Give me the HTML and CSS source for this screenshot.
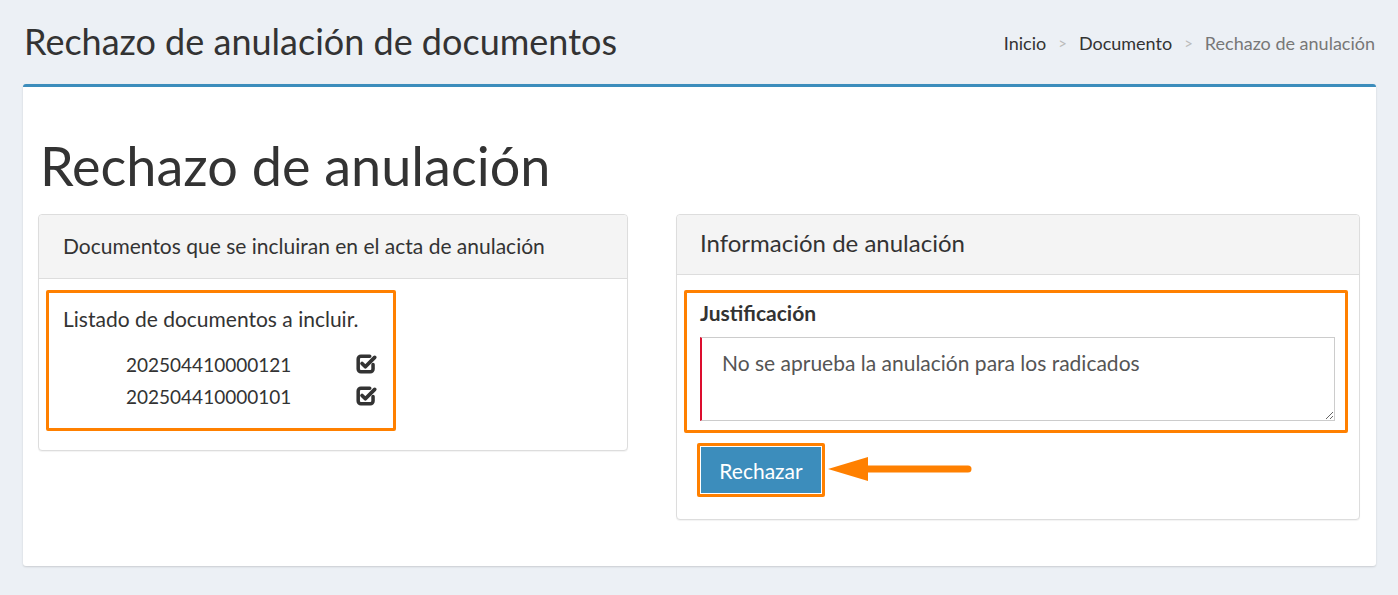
FILE: index.html
```html
<!DOCTYPE html>
<html lang="es">
<head>
<meta charset="utf-8">
<title>Rechazo de anulación de documentos</title>
<link rel="stylesheet" href="styles.css">
</head>
<body>
<header class="content-header">
  <h1 class="page-title">Rechazo de anulación de documentos</h1>
  <ol class="breadcrumb">
    <li class="crumb">Inicio</li>
    <li class="sep">&gt;</li>
    <li class="crumb">Documento</li>
    <li class="sep">&gt;</li>
    <li class="crumb active">Rechazo de anulación</li>
  </ol>
</header>
<main class="box">
  <h2 class="box-title">Rechazo de anulación</h2>
  <div class="row">
    <section class="panel panel-left">
      <div class="panel-heading">Documentos que se incluiran en el acta de anulación</div>
      <div class="panel-body">
        <div class="highlight list-box">
          <p class="list-intro">Listado de documentos a incluir.</p>
          <ul class="doc-list">
            <li class="doc-item"><span class="doc-num">202504410000121</span>
              <svg class="check" viewBox="0 0 20 18" width="22" height="20"><path d="M15.5 9.5 V13.5 A2.5 2.5 0 0 1 13 16 H4.5 A2.5 2.5 0 0 1 2 13.5 V4.5 A2.5 2.5 0 0 1 4.5 2 H12.5" fill="none" stroke="#333" stroke-width="3.2" stroke-linecap="round"/><path d="M5.5 8.5 L8.5 11.5 L17 3" fill="none" stroke="#333" stroke-width="3.4" stroke-linecap="round" stroke-linejoin="round"/></svg>
            </li>
            <li class="doc-item"><span class="doc-num">202504410000101</span>
              <svg class="check" viewBox="0 0 20 18" width="22" height="20"><path d="M15.5 9.5 V13.5 A2.5 2.5 0 0 1 13 16 H4.5 A2.5 2.5 0 0 1 2 13.5 V4.5 A2.5 2.5 0 0 1 4.5 2 H12.5" fill="none" stroke="#333" stroke-width="3.2" stroke-linecap="round"/><path d="M5.5 8.5 L8.5 11.5 L17 3" fill="none" stroke="#333" stroke-width="3.4" stroke-linecap="round" stroke-linejoin="round"/></svg>
            </li>
          </ul>
        </div>
      </div>
    </section>
    <section class="panel panel-right">
      <div class="panel-heading heading-lg">Información de anulación</div>
      <div class="panel-body body-right">
        <div class="highlight form-box">
          <label class="field-label" for="just">Justificación</label>
          <textarea id="just" class="field-text">No se aprueba la anulación para los radicados</textarea>
        </div>
        <div class="action-row">
          <div class="highlight btn-box"><button class="btn-primary" type="button">Rechazar</button></div>
          <svg class="arrow" viewBox="0 0 145 26" width="145" height="26"><polygon points="0,12 40,0 40,24" fill="#ff8000"/><line x1="38" y1="12" x2="140" y2="12" stroke="#ff8000" stroke-width="7" stroke-linecap="round"/></svg>
        </div>
      </div>
    </section>
  </div>
</main>
</body>
</html>
```
FILE: styles.css
```css
* { box-sizing: border-box; }
html, body { margin: 0; padding: 0; }
body {
  background: #ecf0f5;
  font-family: "Lato", "Noto Sans", sans-serif;
  color: #333;
  width: 1398px;
  height: 595px;
  overflow: hidden;
}
.content-header {
  display: flex;
  justify-content: space-between;
  align-items: flex-start;
  padding: 20px 23px 0 24px;
  height: 84px;
}
.page-title {
  margin: 0;
  font-size: 36px;
  font-weight: 400;
  line-height: 42px;
  color: #333;
}
.breadcrumb {
  list-style: none;
  margin: 12px 0 0;
  padding: 0;
  display: flex;
  gap: 12px;
  font-size: 18px;
  line-height: 22px;
}
.crumb { color: #333; }
.crumb.active { color: #777; }
.sep { color: #bbb; font-size: 15px; }
.box {
  margin: 0 22px 0 23px;
  height: 482px;
  background: #fff;
  border-top: 3px solid #3c8dbc;
  border-radius: 3px;
  box-shadow: 0 1px 2px rgba(0,0,0,0.15);
  padding: 0 16px 0 15px;
}
.box-title {
  margin: 0;
  padding: 47px 0 0 2px;
  font-size: 54px;
  font-weight: 400;
  line-height: 64px;
  height: 127px;
  color: #333;
}
.row {
  display: grid;
  grid-template-columns: 590px 684px;
  column-gap: 48px;
  align-items: start;
}
.panel {
  border: 1px solid #ddd;
  border-radius: 4px;
  background: #fff;
  box-shadow: 0 1px 1px rgba(0,0,0,0.05);
}
.panel-heading {
  background: #f4f4f4;
  border-bottom: 1px solid #ddd;
  border-radius: 4px 4px 0 0;
  height: 64px;
  padding: 19px 24px 0;
  font-size: 21px;
  line-height: 24px;
  color: #333;
}
.heading-lg {
  height: 60px;
  font-size: 24px;
  padding: 16px 23px 0;
}
.panel-body {
  padding: 11px 7px 19px;
}
.body-right {
  padding: 15px 11px 22px 7px;
}
.highlight {
  border: 3px solid #ff8000;
  border-radius: 2px;
}
.list-box {
  width: 350px;
  height: 141px;
  padding: 13px 14px 0 14px;
}
.list-intro {
  margin: 0;
  font-size: 21px;
  line-height: 26px;
}
.doc-list {
  list-style: none;
  margin: 16px 0 0;
  padding: 0 0 0 63px;
}
.doc-item {
  display: flex;
  align-items: center;
  justify-content: space-between;
  width: 252px;
  height: 32px;
  font-size: 19px;
}
.form-box {
  height: 143px;
  padding: 7px 10px 10px 13px;
}
.field-label {
  display: block;
  font-weight: 700;
  font-size: 21px;
  line-height: 26px;
  margin-bottom: 11px;
}
.field-text {
  display: block;
  width: 100%;
  height: 84px;
  border: 1px solid #ccc;
  border-left: 2px solid #dc0d2e;
  padding: 12px 20px;
  font-family: inherit;
  font-size: 21px;
  color: #555;
  resize: vertical;
  outline: none;
}
.action-row {
  display: flex;
  align-items: center;
  margin-top: 10px;
  padding-left: 13px;
  gap: 3px;
}
.btn-box {
  width: 128px;
  height: 54px;
  padding: 1px;
}
.btn-primary {
  display: block;
  width: 100%;
  height: 100%;
  border: 0;
  background: #3c8dbc;
  color: #fff;
  font-family: inherit;
  font-size: 21px;
}
.arrow { display: block; }
```
